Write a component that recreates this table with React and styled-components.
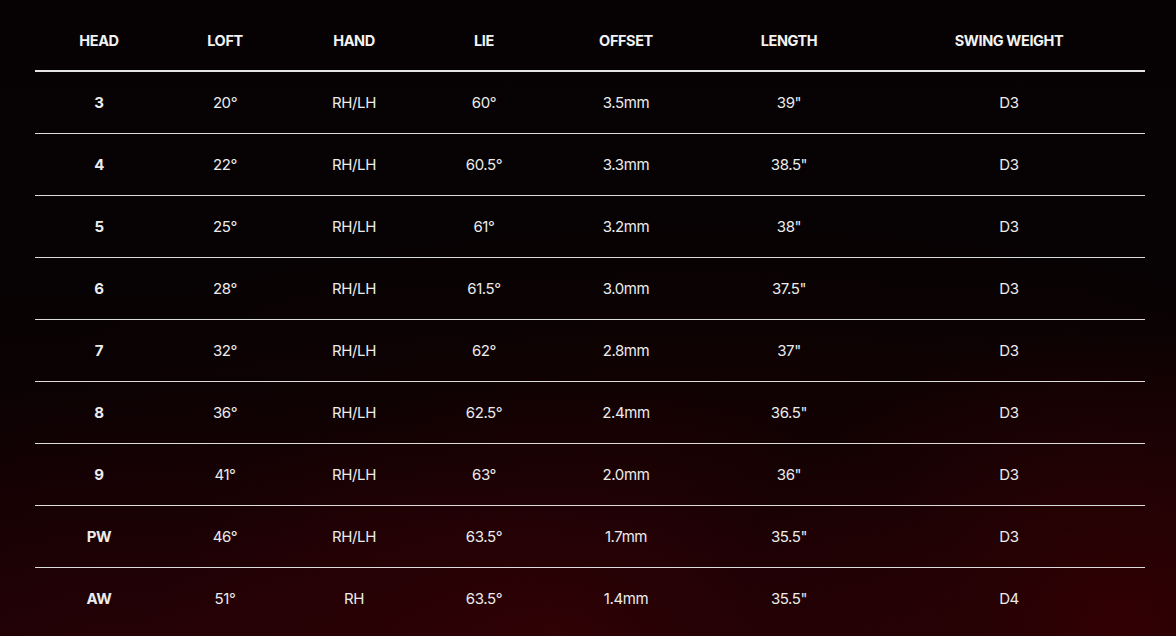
import React from "react";
import styled, { createGlobalStyle } from "styled-components";

const Global = createGlobalStyle`
  html, body { margin: 0; padding: 0; }
  body {
    background: #060203;
    font-family: Inter, "Noto Sans", "Liberation Sans", sans-serif;
    color: #ededed;
  }
`;

const Page = styled.div`
  min-height: 636px;
  box-sizing: border-box;
  padding: 0 31px 0 35px;
  overflow: hidden;
  background:
    radial-gradient(ellipse 420px 260px at 560px 640px, rgba(70, 2, 6, 0.55), rgba(0, 0, 0, 0) 100%),
    radial-gradient(ellipse 380px 300px at 1120px 620px, rgba(70, 0, 4, 0.6), rgba(0, 0, 0, 0) 100%),
    radial-gradient(ellipse 520px 280px at 120px 660px, rgba(55, 2, 6, 0.5), rgba(0, 0, 0, 0) 100%),
    radial-gradient(ellipse 700px 200px at 700px 420px, rgba(30, 0, 2, 0.35), rgba(0, 0, 0, 0) 100%),
    linear-gradient(180deg, #060203 0%, #070203 45%, #140104 100%);
`;

const Table = styled.table`
  width: 1110px;
  border-collapse: collapse;
  table-layout: fixed;
  letter-spacing: -0.4px;
`;

const HeadCell = styled.th`
  font-size: 14.5px;
  font-weight: 700;
  line-height: 20px;
  padding: 31px 0 19px;
  text-align: center;
  text-transform: uppercase;
  color: #f2f2f2;
  border-bottom: 2px solid #e4e4e4;
`;

const Row = styled.tr`
  border-bottom: 1px solid ${(p) => (p.$last ? "transparent" : "#dcdcdc")};
`;

const Cell = styled.td`
  font-size: 15px;
  font-weight: ${(p) => (p.$strong ? 700 : 400)};
  line-height: 20px;
  padding: 21px 0 20px;
  text-align: center;
  color: #ececec;
`;

const columns = [
  { label: "Head", width: 128 },
  { label: "Loft", width: 124 },
  { label: "Hand", width: 134 },
  { label: "Lie", width: 126 },
  { label: "Offset", width: 158 },
  { label: "Length", width: 168 },
  { label: "Swing Weight", width: 272 },
];

const rows = [
  ["3", "20°", "RH/LH", "60°", "3.5mm", '39"', "D3"],
  ["4", "22°", "RH/LH", "60.5°", "3.3mm", '38.5"', "D3"],
  ["5", "25°", "RH/LH", "61°", "3.2mm", '38"', "D3"],
  ["6", "28°", "RH/LH", "61.5°", "3.0mm", '37.5"', "D3"],
  ["7", "32°", "RH/LH", "62°", "2.8mm", '37"', "D3"],
  ["8", "36°", "RH/LH", "62.5°", "2.4mm", '36.5"', "D3"],
  ["9", "41°", "RH/LH", "63°", "2.0mm", '36"', "D3"],
  ["PW", "46°", "RH/LH", "63.5°", "1.7mm", '35.5"', "D3"],
  ["AW", "51°", "RH", "63.5°", "1.4mm", '35.5"', "D4"],
];

export default function App() {
  return (
    <>
      <Global />
      <Page>
        <Table>
          <colgroup>
            {columns.map((c) => (
              <col key={c.label} style={{ width: c.width }} />
            ))}
          </colgroup>
          <thead>
            <tr>
              {columns.map((c) => (
                <HeadCell key={c.label}>{c.label}</HeadCell>
              ))}
            </tr>
          </thead>
          <tbody>
            {rows.map((r, i) => (
              <Row key={r[0]} $last={i === rows.length - 1}>
                {r.map((v, j) => (
                  <Cell key={j} $strong={j === 0}>
                    {v}
                  </Cell>
                ))}
              </Row>
            ))}
          </tbody>
        </Table>
      </Page>
    </>
  );
}
